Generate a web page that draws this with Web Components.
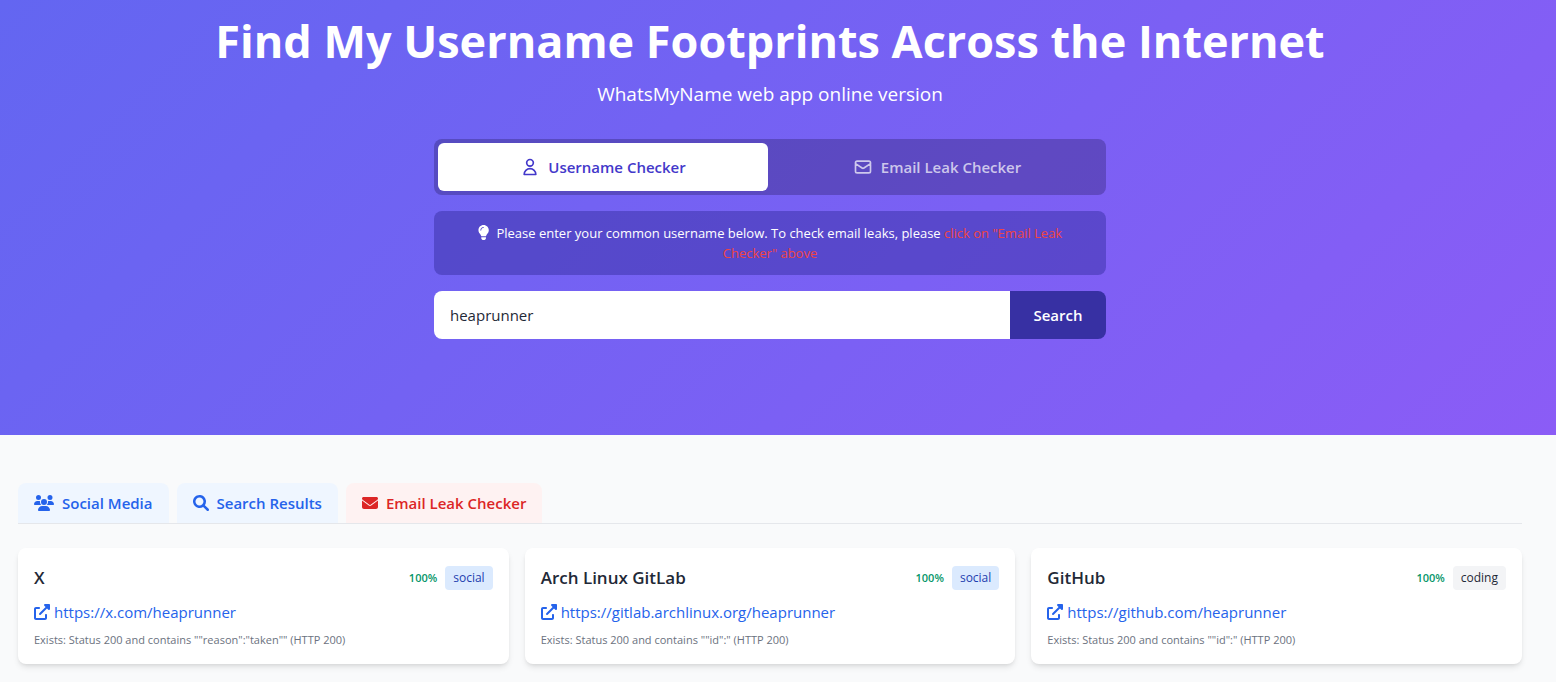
<!DOCTYPE html>
<html lang="en">
<head>
<meta charset="utf-8">
<meta name="viewport" content="width=device-width, initial-scale=1">
<title>Find My Username Footprints Across the Internet</title>
<style>
  body {
    margin: 0;
    background: #f9fafb;
    color: #1f2937;
    font-family: "Segoe UI", "Open Sans", "Noto Sans", sans-serif;
    font-size: 15px;
    line-height: 24px;
  }
</style>
</head>
<body>

<page-hero heading="Find My Username Footprints Across the Internet" subtitle="WhatsMyName web app online version">
  <checker-switch></checker-switch>
  <search-tip>Please enter your common username below. To check email leaks, please <span slot="hint">click on "Email Leak Checker" above</span></search-tip>
  <username-search value="heaprunner"></username-search>
</page-hero>

<results-panel>
  <result-tab slot="tabs" icon="users">Social Media</result-tab>
  <result-tab slot="tabs" icon="search">Search Results</result-tab>
  <result-tab slot="tabs" icon="envelope" danger>Email Leak Checker</result-tab>

  <result-card site="X" href="https://x.com/heaprunner" category="social">Exists: Status 200 and contains ""reason":"taken"" (HTTP 200)</result-card>
  <result-card site="Arch Linux GitLab" href="https://gitlab.archlinux.org/heaprunner" category="social">Exists: Status 200 and contains ""id":" (HTTP 200)</result-card>
  <result-card site="GitHub" href="https://github.com/heaprunner" category="coding">Exists: Status 200 and contains ""id":" (HTTP 200)</result-card>
</results-panel>

<script>
const ICONS = {
  user: {
    box: '0 0 24 24',
    outline: true,
    path: 'M16 7a4 4 0 11-8 0 4 4 0 018 0zM12 14a7 7 0 00-7 7h14a7 7 0 00-7-7z'
  },
  mail: {
    box: '0 0 24 24',
    outline: true,
    path: 'M3 8l7.89 5.26a2 2 0 002.22 0L21 8M5 19h14a2 2 0 002-2V7a2 2 0 00-2-2H5a2 2 0 00-2 2v10a2 2 0 002 2z'
  },
  users: {
    box: '0 0 640 512',
    path: 'M144 0a80 80 0 1 1 0 160A80 80 0 1 1 144 0zM512 0a80 80 0 1 1 0 160A80 80 0 1 1 512 0zM0 298.7C0 239.8 47.8 192 106.7 192h42.7c15.9 0 31 3.5 44.6 9.7c-1.3 7.2-1.9 14.7-1.9 22.3c0 38.2 16.8 72.5 43.3 96c-.2 0-.4 0-.7 0H21.3C9.6 320 0 310.4 0 298.7zM405.3 320c-.2 0-.4 0-.7 0c26.6-23.5 43.3-57.8 43.3-96c0-7.6-.7-15-1.9-22.3c13.6-6.3 28.7-9.7 44.6-9.7h42.7C592.2 192 640 239.8 640 298.7c0 11.8-9.6 21.3-21.3 21.3H405.3zM224 224a96 96 0 1 1 192 0 96 96 0 1 1 -192 0zM128 485.3C128 411.7 187.7 352 261.3 352H378.7C452.3 352 512 411.7 512 485.3c0 14.7-11.9 26.7-26.7 26.7H154.7c-14.7 0-26.7-11.9-26.7-26.7z'
  },
  search: {
    box: '0 0 512 512',
    path: 'M500.3 443.7l-119.7-119.7c27.22-40.41 40.65-90.9 33.46-144.7C401.8 87.79 326.8 13.32 235.2 1.723C99.01-15.51-15.51 99.01 1.724 235.2c11.6 91.64 86.08 166.7 177.6 178.9c53.8 7.189 104.3-6.236 144.7-33.46l119.7 119.7c15.62 15.62 40.95 15.62 56.57 0C515.9 484.7 515.9 459.3 500.3 443.7zM79.1 208c0-70.58 57.42-128 128-128s128 57.42 128 128c0 70.58-57.42 128-128 128S79.1 278.6 79.1 208z'
  },
  envelope: {
    box: '0 0 512 512',
    path: 'M48 64C21.5 64 0 85.5 0 112c0 15.1 7.1 29.3 19.2 38.4L236.8 313.6c11.4 8.5 27 8.5 38.4 0L492.8 150.4c12.1-9.1 19.2-23.3 19.2-38.4c0-26.5-21.5-48-48-48H48zM0 176V384c0 35.3 28.7 64 64 64H448c35.3 0 64-28.7 64-64V176L294.4 339.2c-22.8 17.1-54 17.1-76.8 0L0 176z'
  },
  external: {
    box: '0 0 512 512',
    path: 'M384 320c-17.67 0-32 14.33-32 32v96H64V160h96c17.67 0 32-14.32 32-32s-14.33-32-32-32L64 96c-35.35 0-64 28.65-64 64V448c0 35.34 28.65 64 64 64h288c35.35 0 64-28.66 64-64v-96C416 334.3 401.7 320 384 320zM488 0H352c-12.94 0-24.62 7.797-29.56 19.75c-4.969 11.97-2.219 25.72 6.938 34.88L370.8 96L169.4 297.4c-12.5 12.5-12.5 32.75 0 45.25C175.6 348.9 183.8 352 192 352s16.38-3.125 22.62-9.375L416 141.3l41.38 41.38c9.156 9.141 22.88 11.84 34.88 6.938C504.2 184.6 512 172.9 512 160V24C512 10.74 501.3 0 488 0z'
  },
  lightbulb: {
    box: '0 0 384 512',
    path: 'M112.1 454.3c0 6.297 1.816 12.44 5.284 17.69l17.14 25.69c5.25 7.875 17.17 14.28 26.64 14.28h61.67c9.438 0 21.36-6.401 26.61-14.28l17.08-25.68c2.938-4.438 5.348-12.37 5.348-17.7L272 415.1h-160L112.1 454.3zM191.4 .0132C89.44 .3257 16 82.97 16 175.1c0 44.38 16.44 84.84 43.56 115.8c16.53 18.84 42.34 58.23 52.22 91.45c.0313 .25 .0938 .5166 .125 .7823h160.2c.0313-.2656 .0938-.5166 .125-.7823c9.875-33.22 35.69-72.61 52.22-91.45C351.6 260.8 368 220.4 368 175.1C368 78.61 288.9-.2837 191.4 .0132zM192 96.01c-44.13 0-80 35.89-80 79.1C112 184.8 104.8 192 96 192S80 184.8 80 176c0-61.76 50.25-111.1 112-111.1c8.844 0 16 7.159 16 16S200.8 96.01 192 96.01z'
  }
};

/**
 * Inline icon, sized by --icon-size (its height)
 * @element app-icon
 */
class AppIcon extends HTMLElement {
  constructor() {
    super();
    this.attachShadow({ mode: 'open' });
  }

  connectedCallback() {
    const icon = ICONS[this.getAttribute('name')];
    const paint = icon.outline
      ? 'fill="none" stroke="currentColor" stroke-width="2" stroke-linecap="round" stroke-linejoin="round"'
      : 'fill="currentColor"';

    this.shadowRoot.innerHTML = `
      <style>
        :host {
          display: inline-flex;
          flex: none;
        }

        svg {
          display: block;
          height: var(--icon-size, 16px);
        }
      </style>
      <svg viewBox="${icon.box}" ${paint} aria-hidden="true"><path d="${icon.path}"/></svg>
    `;
  }
}

/**
 * Gradient banner with the page title
 * @element page-hero
 */
class PageHero extends HTMLElement {
  constructor() {
    super();
    this.attachShadow({ mode: 'open' });
  }

  connectedCallback() {
    this.shadowRoot.innerHTML = `
      <style>
        :host {
          display: block;
          background: linear-gradient(135deg, #6366f1, #8b5cf6);
          color: white;
          padding: 16px 16px 96px 0;
          text-align: center;
        }

        h1 {
          margin: 0 0 14px;
          font-size: 45px;
          font-weight: 700;
          line-height: 50px;
        }

        p {
          margin: 0 0 31px;
          font-size: 19px;
          line-height: 28px;
        }

        .tools {
          display: grid;
          gap: 16px;
          max-width: 672px;
          margin: 0 auto;
        }
      </style>
      <header>
        <h1>${this.getAttribute('heading')}</h1>
        <p>${this.getAttribute('subtitle')}</p>
      </header>
      <div class="tools"><slot></slot></div>
    `;
  }
}

/**
 * Switch between the username and the email checker
 * @element checker-switch
 */
class CheckerSwitch extends HTMLElement {
  constructor() {
    super();
    this.attachShadow({ mode: 'open' });
  }

  connectedCallback() {
    this.shadowRoot.innerHTML = `
      <style>
        :host {
          display: flex;
          gap: 4px;
          padding: 4px;
          border-radius: 8px;
          background: rgba(30, 20, 80, 0.3);
        }

        button {
          --icon-size: 20px;
          display: flex;
          flex: 1 1 0;
          align-items: center;
          justify-content: center;
          gap: 8px;
          padding: 12px 24px;
          border: 0;
          border-radius: 6px;
          background: none;
          color: rgba(255, 255, 255, 0.7);
          font: inherit;
          font-weight: 600;
          cursor: pointer;
        }

        button[aria-pressed="true"] {
          background: white;
          color: #4338ca;
        }
      </style>
      <button type="button" aria-pressed="true"><app-icon name="user"></app-icon>Username Checker</button>
      <button type="button" aria-pressed="false"><app-icon name="mail"></app-icon>Email Leak Checker</button>
    `;

    const buttons = this.shadowRoot.querySelectorAll('button');
    buttons.forEach((button) => {
      button.addEventListener('click', () => {
        buttons.forEach((other) => other.setAttribute('aria-pressed', other === button));
      });
    });
  }
}

/**
 * Short advice above the search box
 * @element search-tip
 */
class SearchTip extends HTMLElement {
  constructor() {
    super();
    this.attachShadow({ mode: 'open' });
  }

  connectedCallback() {
    this.shadowRoot.innerHTML = `
      <style>
        :host {
          display: block;
          padding: 12px 32px;
          border-radius: 8px;
          background: rgba(55, 48, 163, 0.5);
          font-size: 13px;
          line-height: 20px;
        }

        app-icon {
          --icon-size: 15px;
          margin-right: 4px;
          vertical-align: -2px;
        }

        .hint {
          color: #ef4444;
        }
      </style>
      <app-icon name="lightbulb"></app-icon>
      <slot></slot><span class="hint"><slot name="hint"></slot></span>
    `;
  }
}

/**
 * Username box with its search button
 * @element username-search
 */
class UsernameSearch extends HTMLElement {
  constructor() {
    super();
    this.attachShadow({ mode: 'open' });
  }

  connectedCallback() {
    this.shadowRoot.innerHTML = `
      <style>
        :host {
          display: block;
        }

        form {
          display: flex;
          border-radius: 8px;
          overflow: hidden;
        }

        input {
          flex: 1;
          min-width: 0;
          padding: 12px 16px;
          border: 0;
          outline: 0;
          background: white;
          color: #1f2937;
          font: inherit;
        }

        button {
          width: 96px;
          padding: 12px 0;
          border: 0;
          background: #3730a3;
          color: white;
          font: inherit;
          font-weight: 600;
          cursor: pointer;
        }
      </style>
      <form>
        <input type="text" aria-label="Username" value="${this.getAttribute('value')}">
        <button type="submit">Search</button>
      </form>
    `;

    this.shadowRoot.querySelector('form').addEventListener('submit', (event) => {
      event.preventDefault();
    });
  }
}

/**
 * Row of tabs with the grid of cards below it
 * @element results-panel
 */
class ResultsPanel extends HTMLElement {
  constructor() {
    super();
    this.attachShadow({ mode: 'open' });
  }

  connectedCallback() {
    this.shadowRoot.innerHTML = `
      <style>
        :host {
          display: block;
          padding: 48px 34px 16px 18px;
        }

        nav {
          display: flex;
          gap: 8px;
          margin-bottom: 24px;
          border-bottom: 1px solid #e5e7eb;
        }

        .grid {
          display: grid;
          grid-template-columns: repeat(3, minmax(0, 1fr));
          gap: 16px;
        }
      </style>
      <nav><slot name="tabs"></slot></nav>
      <div class="grid"><slot></slot></div>
    `;
  }
}

/**
 * One tab of the results panel
 * @element result-tab
 */
class ResultTab extends HTMLElement {
  constructor() {
    super();
    this.attachShadow({ mode: 'open' });
  }

  connectedCallback() {
    this.shadowRoot.innerHTML = `
      <style>
        :host {
          display: block;
          --tab-color: #2563eb;
          --tab-background: #eff6ff;
        }

        :host([danger]) {
          --tab-color: #dc2626;
          --tab-background: #fef2f2;
        }

        button {
          display: flex;
          align-items: center;
          gap: 8px;
          padding: 8px 16px;
          border: 0;
          border-radius: 8px 8px 0 0;
          background: var(--tab-background);
          color: var(--tab-color);
          font: inherit;
          font-weight: 600;
          cursor: pointer;
        }
      </style>
      <button type="button"><app-icon name="${this.getAttribute('icon')}"></app-icon><slot></slot></button>
    `;
  }
}

/**
 * Account found on one site
 * @element result-card
 */
class ResultCard extends HTMLElement {
  constructor() {
    super();
    this.attachShadow({ mode: 'open' });
  }

  connectedCallback() {
    const href = this.getAttribute('href');
    const category = this.getAttribute('category');

    this.shadowRoot.innerHTML = `
      <style>
        :host {
          display: block;
          padding: 16px;
          border-radius: 8px;
          background: white;
          box-shadow: 0 4px 6px -1px rgba(0, 0, 0, 0.1), 0 2px 4px -2px rgba(0, 0, 0, 0.1);
        }

        .top {
          display: flex;
          align-items: center;
          gap: 8px;
          margin-bottom: 8px;
        }

        h3 {
          flex: 1;
          margin: 0;
          font-size: 17px;
          font-weight: 600;
          line-height: 28px;
        }

        .score {
          color: #059669;
          font-size: 11px;
          font-weight: 600;
          line-height: 16px;
        }

        .category {
          padding: 4px 8px;
          border-radius: 4px;
          background: #f3f4f6;
          color: #1f2937;
          font-size: 12px;
          line-height: 16px;
        }

        .social {
          background: #dbeafe;
          color: #1e40af;
        }

        a {
          display: flex;
          align-items: center;
          gap: 4px;
          color: #2563eb;
          text-decoration: none;
        }

        p {
          margin: 8px 0 0;
          color: #6b7280;
          font-size: 11px;
          line-height: 16px;
        }
      </style>
      <div class="top">
        <h3>${this.getAttribute('site')}</h3>
        <span class="score">100%</span>
        <span class="category ${category}">${category}</span>
      </div>
      <a href="${href}"><app-icon name="external"></app-icon>${href}</a>
      <p><slot></slot></p>
    `;
  }
}

customElements.define('app-icon', AppIcon);
customElements.define('page-hero', PageHero);
customElements.define('checker-switch', CheckerSwitch);
customElements.define('search-tip', SearchTip);
customElements.define('username-search', UsernameSearch);
customElements.define('results-panel', ResultsPanel);
customElements.define('result-tab', ResultTab);
customElements.define('result-card', ResultCard);
</script>
</body>
</html>
